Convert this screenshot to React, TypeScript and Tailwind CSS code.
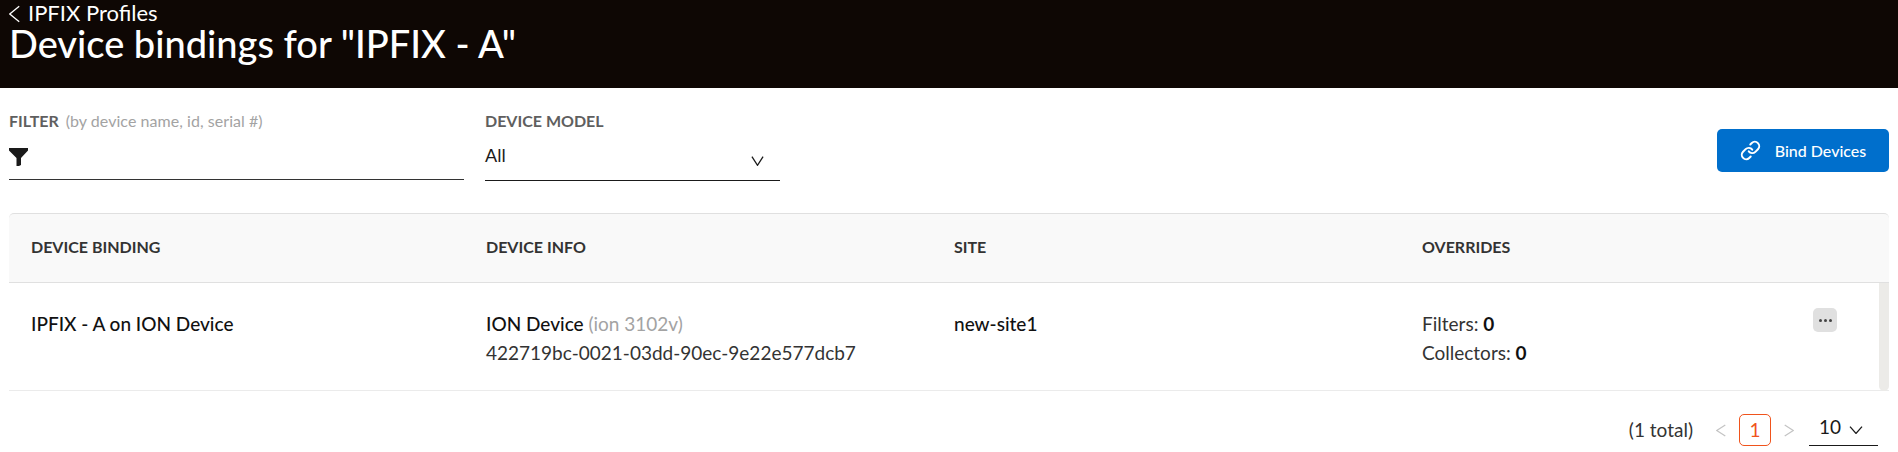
import { Link } from 'lucide-react';

const columns = ['DEVICE BINDING', 'DEVICE INFO', 'SITE', 'OVERRIDES'];

function Chevron({ d, className }: { d: string; className: string }) {
  return (
    <svg className={className} viewBox="0 0 14 14" fill="none" stroke="currentColor" strokeWidth={1.3} preserveAspectRatio="none">
      <path d={d} vectorEffect="non-scaling-stroke" />
    </svg>
  );
}

const DOWN = 'M1 1L7 13L13 1';
const LEFT = 'M13 1L1 7L13 13';
const RIGHT = 'M1 1L13 7L1 13';

export default function App() {
  return (
    <div className="h-[452px] w-[1898px] overflow-hidden bg-white font-['Lato',sans-serif] text-[#1a1a1a]">
      {/* Header */}
      <header className="h-[88px] bg-[#0e0704] pl-[9px] text-white">
        <div className="flex h-[26px] items-center text-[22px] leading-[26px]">
          <Chevron d={LEFT} className="mr-[8px] mt-[2px] h-[18px] w-[11px]" />
          <span>IPFIX Profiles</span>
        </div>
        <h1 className="text-[38px] font-medium leading-[34px]">Device bindings for "IPFIX - A"</h1>
      </header>

      {/* Filters */}
      <div className="flex h-[125px] items-start pl-[9px] pr-[9px]">
        <div className="mt-[23px] w-[455px]">
          <div className="text-[16px] font-bold leading-[19px] text-[#5f5f5f]">
            FILTER <span className="ml-[3px] font-normal tracking-[0.05px] text-[#a3a3a3]">(by device name, id, serial #)</span>
          </div>
          <div className="mt-[14px] flex h-[36px] items-start border-b border-[#333333] pt-[4px]">
            <svg className="h-[18px] w-[19px]" viewBox="0 0 19 18" fill="#1a1a1a">
              <path d="M0 0h19v2.500L12 10v7l-2 1H7.500V10L0 2.500z" />
            </svg>
          </div>
        </div>
        <div className="ml-[21px] mt-[23px] w-[295px]">
          <div className="text-[16px] font-bold leading-[19px] text-[#5f5f5f]">DEVICE MODEL</div>
          <div className="mt-[14px] flex h-[37px] items-start justify-between border-b border-[#1a1a1a]">
            <span className="text-[18px] leading-[22px]">All</span>
            <Chevron d={DOWN} className="mr-[16px] mt-[12px] h-[10px] w-[13px]" />
          </div>
        </div>
        <button className="ml-auto mt-[41px] flex h-[43px] w-[172px] items-center justify-center gap-[14px] rounded-[5px] bg-[#006fcc] text-[16px] font-medium text-white">
          <Link className="h-[21px] w-[21px]" strokeWidth={2.25} />
          Bind Devices
        </button>
      </div>

      {/* Table */}
      <div className="ml-[9px] mr-[9px]">
        <div className="grid h-[70px] grid-cols-[455px_468px_468px_1fr] items-center rounded-t-[5px] border-y border-[#e0e0e0] bg-[#f9f9f9] pb-[2px] pl-[22px] text-[16px] font-bold text-[#333333]">
          {columns.map((name) => (
            <div key={name}>{name}</div>
          ))}
        </div>
        <div className="relative grid h-[108px] grid-cols-[455px_468px_468px_1fr] border-b border-[#ebebeb] pl-[22px] pt-[26px] text-[19px] leading-[29px]">
          <div className="font-medium text-[#111111]">IPFIX - A on ION Device</div>
          <div>
            <div className="font-medium text-[#111111]">
              ION Device <span className="font-normal text-[#a3a3a3]">(ion 3102v)</span>
            </div>
            <div className="text-[#333333]">422719bc-0021-03dd-90ec-9e22e577dcb7</div>
          </div>
          <div className="font-medium text-[#111111]">new-site1</div>
          <div className="text-[#333333]">
            <div>
              Filters: <span className="font-bold text-[#111111]">0</span>
            </div>
            <div>
              Collectors: <span className="font-bold text-[#111111]">0</span>
            </div>
          </div>
          <button className="absolute left-[1804px] top-[25px] flex h-[24px] w-[24px] items-center justify-center gap-[2px] rounded-[5px] bg-[#e0e0e0]">
            <span className="h-[3px] w-[3px] rounded-full bg-[#444444]" />
            <span className="h-[3px] w-[3px] rounded-full bg-[#444444]" />
            <span className="h-[3px] w-[3px] rounded-full bg-[#444444]" />
          </button>
          <div className="absolute right-0 top-0 h-[108px] w-[10px] rounded-b-[5px] bg-[#ecebe8]" />
        </div>
      </div>

      {/* Pagination */}
      <div className="mt-[23px] flex h-[32px] items-center justify-end pr-[20px] text-[19px]">
        <span className="text-[#333333]">(1 total)</span>
        <Chevron d={LEFT} className="ml-[23px] h-[13px] w-[10px] text-[#c4c4c4]" />
        <span className="ml-[13px] flex h-[32px] w-[32px] items-center justify-center rounded-[5px] border border-[#f0531c] text-[#f0531c]">1</span>
        <Chevron d={RIGHT} className="ml-[13px] h-[13px] w-[10px] text-[#c4c4c4]" />
        <div className="ml-[15px] flex h-[32px] w-[69px] items-start justify-start gap-[8px] border-b border-[#1a1a1a] pl-[10px]">
          <span className="leading-[26px]">10</span>
          <Chevron d={DOWN} className="mt-[12px] h-[8px] w-[14px]" />
        </div>
      </div>
    </div>
  );
}
